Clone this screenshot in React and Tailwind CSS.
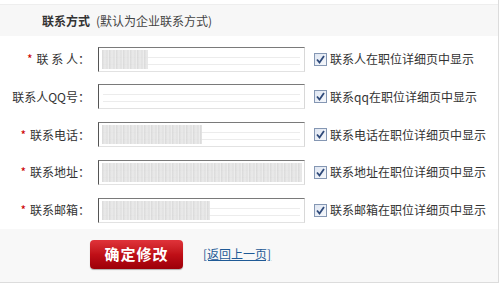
import React from "react";

const rows = [
  { label: "联 系 人：", req: true, blur: "w-[46px]", note: "联系人在职位详细页中显示" },
  { label: "联系人QQ号：", req: false, blur: "", note: "联系qq在职位详细页中显示" },
  { label: "联系电话：", req: true, blur: "w-[100px]", note: "联系电话在职位详细页中显示" },
  { label: "联系地址：", req: true, blur: "w-[200px]", note: "联系地址在职位详细页中显示" },
  { label: "联系邮箱：", req: true, blur: "w-[108px]", note: "联系邮箱在职位详细页中显示" },
];

function Check() {
  return (
    <span className="flex h-[13px] w-[13px] shrink-0 items-center justify-center border border-[#8597b3] bg-gradient-to-br from-[#dfe6f2] to-[#f6f8fb]">
      <svg width="9" height="9" viewBox="0 0 9 9">
        <path d="M1 4.5 L3.5 7.5 L8 1" fill="none" stroke="#2f4a7a" strokeWidth="1.8" />
      </svg>
    </span>
  );
}

export default function App() {
  return (
    <div
      className="h-[284px] w-[499px] bg-white text-[12px] text-[#333]"
      style={{ fontFamily: '"Noto Sans CJK SC", "Microsoft YaHei", sans-serif' }}
    >
      <div className="flex h-[283px] flex-col border-r border-b border-[#dcdcdc]">
        <div className="mt-[4px] flex h-[33px] items-center border-t border-[#eeeeee] bg-[#f7f7f7] pl-[42px]">
          <span className="font-bold text-[12px] text-[#333]">联系方式</span>
          <span className="ml-[6px] text-[12px] text-[#444]">(默认为企业联系方式)</span>
        </div>
        <div className="flex flex-col pt-[4px]">
          {rows.map((r, i) => (
            <div key={i} className="flex h-[37.7px] items-center">
              <div className="w-[92px] shrink-0 whitespace-pre pr-[2px] text-right text-[12px] text-[#333]">
                {r.req && <span className="mr-[4px] text-[#c00]">*</span>}
                <span>{r.label}</span>
              </div>
              <div className="relative ml-[6px] h-[25px] w-[207px] shrink-0 border-t border-l border-r border-b border-t-[#7a7a7a] border-l-[#555] border-r-[#d8d8d8] border-b-[#e2e2e2] bg-white">
                <div className="absolute inset-x-[4px] top-[9px] h-px bg-[#ececec]" />
                <div className="absolute inset-x-[4px] top-[16px] h-px bg-[#ececec]" />
                {r.blur && (
                  <div className={`absolute left-[3px] top-[2px] h-[19px] ${r.blur} bg-[repeating-linear-gradient(90deg,#d6d6d6_0px,#e9e9e9_3px,#dcdcdc_5px,#f0f0f0_7px)] blur-[0.6px] opacity-90`} />
                )}
              </div>
              <div className="ml-[9px] flex items-center gap-[3px]">
                <Check />
                <span className="text-[12px] text-[#333]">{r.note}</span>
              </div>
            </div>
          ))}
        </div>
        <div className="mt-auto flex h-[54px] items-center bg-[#f8f8f8] pl-[90px] pb-[2px]">
          <button className="flex h-[29px] w-[93px] items-center justify-center rounded-[4px] bg-gradient-to-b from-[#e0333a] via-[#c00f17] to-[#9c0008] text-[15px] font-bold tracking-[1px] text-white shadow-[0_1px_1px_rgba(0,0,0,0.3)]">
            确定修改
          </button>
          <a className="ml-[20px] text-[12px] text-[#1f5a96] underline">[返回上一页]</a>
        </div>
      </div>
    </div>
  );
}
